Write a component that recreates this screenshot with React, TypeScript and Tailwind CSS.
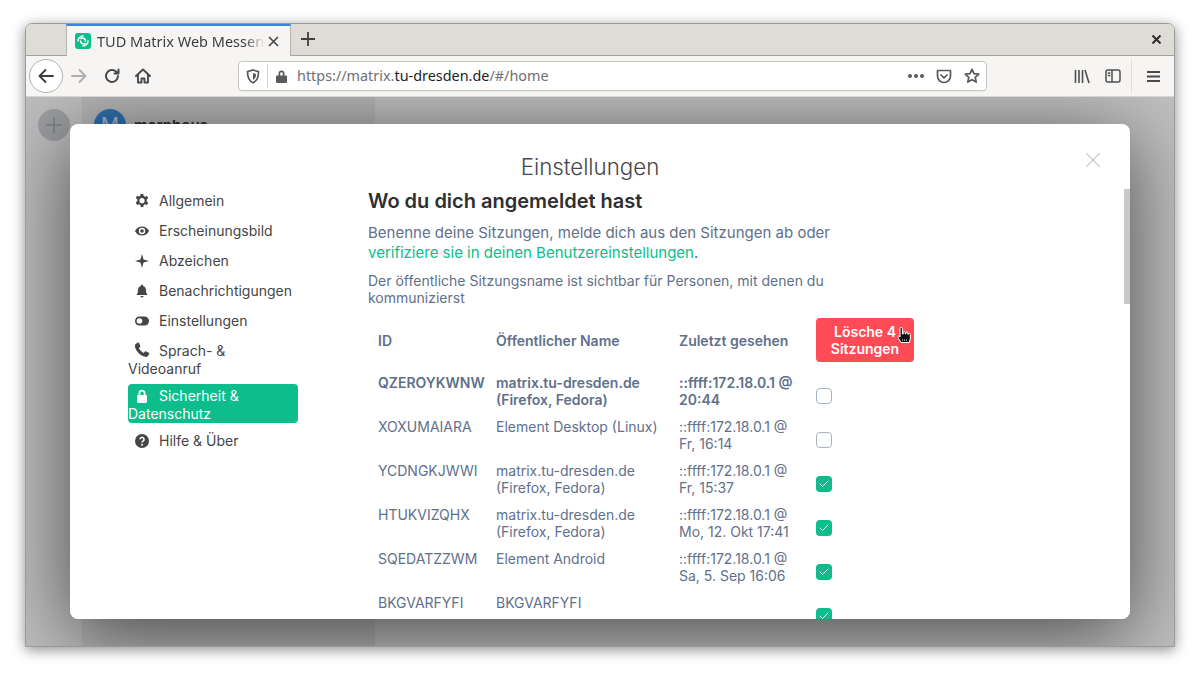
import React from "react";
import { Check } from "lucide-react";

const nav = [
  { t: "Allgemein", i: "gear" },
  { t: "Erscheinungsbild", i: "eye" },
  { t: "Abzeichen", i: "star" },
  { t: "Benachrichtigungen", i: "bell" },
  { t: "Einstellungen", i: "toggle" },
  { t: "Sprach- & Videoanruf", i: "phone" },
  { t: "Sicherheit & Datenschutz", i: "lock", active: true },
  { t: "Hilfe & Über", i: "help" },
];

function NavIcon({ i, active }: { i: string; active?: boolean }) {
  const c = "w-[14px] h-[14px] absolute left-[7px] " + (active ? "top-[5px]" : "top-[2px]");
  if (i === "gear")
    return (
      <svg className={c} viewBox="0 0 14 14">
        <path
          fill="currentColor"
          d="M5.700 0h2.600l.4 2 1.300.7 1.900-.7 1.300 2.300-1.500 1.300v1.800l1.500 1.300-1.300 2.300-1.900-.7-1.300.7-.4 2H5.700l-.4-2-1.300-.7-1.900.7L.8 8.400l1.500-1.300V5.300L.8 4l1.300-2.300 1.900.7 1.300-.7z"
        />
        <circle cx="7" cy="6.700" r="2.600" fill="#fff" />
      </svg>
    );
  if (i === "eye")
    return (
      <svg className={c} viewBox="0 0 14 14">
        <path fill="currentColor" d="M0 7c1.500-3 4-4.500 7-4.500S12.500 4 14 7c-1.500 3-4 4.500-7 4.500S1.500 10 0 7z" />
        <circle cx="7" cy="7" r="3.200" fill="#fff" />
        <circle cx="7" cy="7" r="1.800" fill="currentColor" />
      </svg>
    );
  if (i === "star")
    return (
      <svg className={c} viewBox="0 0 14 14" fill="currentColor">
        <path d="M7 0 L8.500 5.500 L14 7 L8.500 8.500 L7 14 L5.500 8.500 L0 7 L5.500 5.500 Z" />
      </svg>
    );
  if (i === "bell")
    return (
      <svg className={c} viewBox="0 0 14 14" fill="currentColor">
        <path d="M7 0.500a1 1 0 0 1 1 1v.4C9.800 2.400 11 4 11 6c0 3 .8 4 1.600 5H1.400C2.200 10 3 9 3 6c0-2 1.200-3.600 3-4.100V1.500a1 1 0 0 1 1-1zM5.500 12h3a1.500 1.500 0 0 1-3 0z" />
      </svg>
    );
  if (i === "toggle")
    return (
      <svg className={c} viewBox="0 0 14 14">
        <rect x="0" y="2.500" width="14" height="9" rx="4.500" fill="currentColor" />
        <circle cx="4.500" cy="7" r="2.800" fill="#fff" />
      </svg>
    );
  if (i === "phone")
    return (
      <svg className="w-[16px] h-[16px] absolute left-[6px] top-[0px]" viewBox="0 0 16 16" fill="currentColor">
        <path d="M1.500 2.200 3.800.6c.4-.3 1-.2 1.200.3l1.300 2.800c.2.400.1.800-.2 1.100L4.900 5.900c.8 2 2.600 3.900 4.800 5l1.200-1.300c.3-.3.800-.4 1.200-.2l2.700 1.300c.5.2.6.800.4 1.200l-1.500 2.300c-.3.500-.8.700-1.300.7C6.600 14.500 1 8.700.9 3.400c0-.5.200-.9.600-1.200z" />
      </svg>
    );
  if (i === "lock")
    return (
      <svg className={c} viewBox="0 0 14 14" fill="currentColor">
        <path d="M3.500 6V4.300a3.500 3.500 0 0 1 7 0V6h.5a1 1 0 0 1 1 1v5.500a1.500 1.500 0 0 1-1.500 1.500h-7A1.500 1.500 0 0 1 2 12.500V7a1 1 0 0 1 1-1zM5.300 6h3.400V4.300a1.700 1.700 0 0 0-3.400 0z" />
      </svg>
    );
  return (
    <svg className={c} viewBox="0 0 14 14">
      <circle cx="7" cy="7" r="7" fill="currentColor" />
      <path d="M5 5.300a2 2 0 1 1 3 1.800c-.7.400-1 .7-1 1.500" fill="none" stroke="#fff" strokeWidth="1.600" />
      <circle cx="7" cy="10.700" r="1" fill="#fff" />
    </svg>
  );
}

const rows = [
  { id: "QZEROYKWNW", name: "matrix.tu-dresden.de (Firefox, Fedora)", seen: "::ffff:172.18.0.1 @ 20:44", checked: false, bold: true },
  { id: "XOXUMAIARA", name: "Element Desktop (Linux)", seen: "::ffff:172.18.0.1 @ Fr, 16:14", checked: false },
  { id: "YCDNGKJWWI", name: "matrix.tu-dresden.de (Firefox, Fedora)", seen: "::ffff:172.18.0.1 @ Fr, 15:37", checked: true },
  { id: "HTUKVIZQHX", name: "matrix.tu-dresden.de (Firefox, Fedora)", seen: "::ffff:172.18.0.1 @ Mo, 12. Okt 17:41", checked: true },
  { id: "SQEDATZZWM", name: "Element Android", seen: "::ffff:172.18.0.1 @ Sa, 5. Sep 16:06", checked: true },
  { id: "BKGVARFYFI", name: "BKGVARFYFI", seen: "", checked: true },
];

function Cursor() {
  return (
    <svg className="absolute left-[81px] top-[9px]" width="15" height="18" viewBox="0 0 15 18">
      <path
        d="M3 1.500a1.200 1.200 0 0 1 2.400 0V7h.8V5.500a1 1 0 0 1 2 0V7h.6V6a1 1 0 0 1 2 0v1.300h.5a1 1 0 0 1 2 0V12l-1 3.500H4L1 10.500c-.6-1 .6-2 1.500-1.200L3 10z"
        fill="#111"
        stroke="#fff"
        strokeWidth="1"
      />
      <path d="M5 13h1M7 13h1M9 13h1" stroke="#fff" strokeWidth="1" />
    </svg>
  );
}

function Toolbar() {
  return (
    <div className="h-[41px] flex items-center bg-[#f6f5f4] border-b border-[#d8d6d3] pl-[3px] text-[#555753]">
      <div className="w-[34px] h-[34px] rounded-full bg-white border border-[#b5b3b0] flex items-center justify-center">
        <svg width="16" height="16" viewBox="0 0 16 16" fill="none" stroke="#3d3d3d" strokeWidth="1.800" strokeLinecap="round" strokeLinejoin="round">
          <path d="M15 8H1.500M7.500 2l-6 6 6 6" />
        </svg>
      </div>
      <svg className="ml-[8px]" width="16" height="16" viewBox="0 0 16 16" fill="none" stroke="#aeaeae" strokeWidth="1.800" strokeLinecap="round" strokeLinejoin="round">
        <path d="M1 8h13.500M8.500 2l6 6-6 6" />
      </svg>
      <svg className="ml-[17px]" width="16" height="16" viewBox="0 0 16 16" fill="none" stroke="#4a4a4a" strokeWidth="2" strokeLinecap="round" strokeLinejoin="round">
        <path d="M14 8a6 6 0 1 1-1.800-4.300L14 5.500M14.500 1.500v4h-4" />
      </svg>
      <svg className="ml-[15px]" width="16" height="16" viewBox="0 0 16 16" fill="none" stroke="#4a4a4a" strokeWidth="1.900" strokeLinecap="round" strokeLinejoin="round">
        <path d="M1 8l7-6.500L15 8M3 6.500V14.500h3.500V10.500h3v4H13V6.500" />
      </svg>
      <div className="ml-[87px] w-[749px] h-[30px] bg-white border border-[#c9c7c4] rounded-[4px] flex items-center shadow-[0_1px_0_rgba(0,0,0,0.04)]">
        <svg className="ml-[7px]" width="14" height="15" viewBox="0 0 14 15" fill="none" stroke="#5a5a5a" strokeWidth="1.700">
          <path d="M7 1l5.500 1.700c0 5-1 9-5.500 11C2.500 11.700 1.500 7.700 1.500 2.700z" />
          <path d="M7 4l3 1c0 3-.5 4.500-3 6z" fill="#5a5a5a" stroke="none" />
        </svg>
        <div className="ml-[7px] w-px h-[24px] bg-[#d5d3d0]" />
        <svg className="ml-[7px]" width="13" height="15" viewBox="0 0 13 15" fill="#5a5a5a">
          <path d="M3.500 6.500V4.500a3 3 0 0 1 6 0v2H11a1 1 0 0 1 1 1V13a1 1 0 0 1-1 1H2a1 1 0 0 1-1-1V7.500a1 1 0 0 1 1-1zM5.200 6.500h2.600V4.500a1.300 1.300 0 0 0-2.600 0z" />
        </svg>
        <div className="ml-[9px] text-[14.4px] text-[#6f6f6f] whitespace-nowrap [font-family:'Noto_Sans',sans-serif]">
          https://matrix.<span className="text-[#1d1d1d]">tu-dresden.de</span>/#/home
        </div>
        <div className="ml-auto flex items-center">
          <div className="flex gap-[2px]">
            <div className="w-[4px] h-[4px] rounded-full bg-[#5a5a5a]" />
            <div className="w-[4px] h-[4px] rounded-full bg-[#5a5a5a]" />
            <div className="w-[4px] h-[4px] rounded-full bg-[#5a5a5a]" />
          </div>
          <svg className="ml-[12px]" width="16" height="15" viewBox="0 0 16 15" fill="none" stroke="#5a5a5a" strokeWidth="1.700" strokeLinecap="round" strokeLinejoin="round">
            <path d="M1.500 1.500h13V7a6.500 6.500 0 0 1-13 0zM5 6l3 2.800L11 6" />
          </svg>
          <svg className="ml-[12px] mr-[6px]" width="16" height="16" viewBox="0 0 16 16" fill="none" stroke="#5a5a5a" strokeWidth="1.700" strokeLinejoin="round">
            <path d="M8 1.300l2 4.400 4.800.5-3.600 3.200 1 4.700L8 11.700l-4.200 2.400 1-4.700-3.600-3.200 4.800-.5z" />
          </svg>
        </div>
      </div>
      <svg className="ml-[87px]" width="16" height="15" viewBox="0 0 16 15" fill="none" stroke="#4f4f4f" strokeWidth="1.600">
        <path d="M1.500 1v13M5 1v13M8.500 1v13M11 1l4 13" />
      </svg>
      <svg className="ml-[15px]" width="16" height="14" viewBox="0 0 16 14" fill="none" stroke="#4f4f4f" strokeWidth="1.500">
        <rect x="1" y="1" width="14" height="12" rx="2" />
        <path d="M7 1v12" />
        <path d="M2.800 4h2.500M2.800 6.500h2.500" />
      </svg>
      <div className="ml-[10px] w-px h-[34px] bg-[#e0dedb]" />
      <svg className="ml-[15px]" width="13" height="13" viewBox="0 0 13 13" stroke="#4a4a4a" strokeWidth="1.800">
        <path d="M0 2h13M0 6.500h13M0 11h13" />
      </svg>
    </div>
  );
}

export default function App() {
  return (
    <div className="w-[1200px] h-[675px] bg-white pt-[23px] pl-[25px] overflow-hidden [font-family:Inter,sans-serif]">
      <div className="relative w-[1150px] h-[624px] rounded-t-[7px] border border-[#9a9a9a] overflow-hidden shadow-[0_3px_14px_rgba(0,0,0,0.45)] flex flex-col">
        <div className="h-[32px] bg-[#dfdcd8] border-b border-[#a3a19e] flex items-end shrink-0 relative">
          <div className="ml-[40px] w-[225px] h-[32px] bg-[#f6f5f4] border-x border-[#b5b3b0] border-t-[2px] border-t-[#3584e4] -mb-px flex items-center relative">
            <div className="ml-[8px] w-[16px] h-[16px] rounded-[3px] bg-[#0dbd8b] flex items-center justify-center">
              <svg width="12" height="12" viewBox="0 0 12 12" fill="none" stroke="#fff" strokeWidth="1.500" strokeLinecap="round">
                <path d="M1 6a5 5 0 0 1 5-5M11 6a5 5 0 0 1-5 5M4 3.500a3 3 0 0 1 4.500 2.500M8 8.500A3 3 0 0 1 3.500 6" />
              </svg>
            </div>
            <div className="ml-[6px] text-[14.5px] text-[#3d3d3d] whitespace-nowrap w-[168px] h-[22px] leading-[22px] overflow-hidden [font-family:'Noto_Sans',sans-serif] [mask-image:linear-gradient(to_right,#000_88%,transparent)]">
              TUD Matrix Web Messenger
            </div>
            <svg className="ml-[3px]" width="11" height="11" viewBox="0 0 11 11" stroke="#4a4a4a" strokeWidth="1.700">
              <path d="M1 1l9 9M10 1l-9 9" />
            </svg>
          </div>
          <svg className="ml-[10px] mb-[9px]" width="14" height="14" viewBox="0 0 14 14" stroke="#404040" strokeWidth="1.800">
            <path d="M7 0v14M0 7h14" />
          </svg>
          <svg className="ml-auto mr-[13px] mb-[11px]" width="9" height="9" viewBox="0 0 9 9" stroke="#2e2e2e" strokeWidth="2">
            <path d="M.5.500l8 8M8.500.500l-8 8" />
          </svg>
        </div>
        <Toolbar />

        <div className="flex-1 relative flex bg-[#bfbfbf] overflow-hidden">
          <div className="w-[56px] bg-[#bdbdbd] pt-[12px] pl-[12px]">
            <div className="w-[32px] h-[32px] rounded-full bg-[#9b9da1] flex items-center justify-center">
              <svg width="16" height="16" viewBox="0 0 16 16" stroke="#7f8185" strokeWidth="1.600">
                <path d="M8 0v16M0 8h16" />
              </svg>
            </div>
          </div>
          <div className="w-[293px] bg-[#b4b4b4] pl-[12px] pt-[12px] flex items-start relative">
            <div className="w-[32px] h-[32px] rounded-full bg-[#2f70ad] text-[#9fb9d4] text-[20px] flex items-center justify-center">M</div>
            <div className="ml-[8px] mt-[6px] font-semibold text-[15px] text-[#2b2b2b]">morphous</div>
          </div>
          <div className="flex-1 bg-[#bfbfbf]" />

          {/* modal */}
          <div className="absolute left-[44px] top-[27px] w-[1060px] h-[495px] bg-white rounded-[8px] shadow-[0_15px_80px_rgba(0,0,0,0.62)] overflow-hidden">
            <div className="relative h-full pl-[58px] pt-[29px]">
              <div className="absolute left-[1054px] top-[65px] w-[6px] h-[115px] bg-[#c8c8c8]" />
              <svg className="absolute left-[1016px] top-[29px]" width="14" height="14" viewBox="0 0 14 14" stroke="#c4c4c4" strokeWidth="1.100">
                <path d="M0 0l14 14M14 0L0 14" />
              </svg>
              <div className="-ml-[58px] pr-[20px] text-center text-[22.300px] font-light text-[#45474a] leading-[28px]">Einstellungen</div>
              <div className="flex mt-[8px]">
                <div className="w-[170px] shrink-0 text-[14px] leading-[18px] text-[#454545] pt-[3px]">
                  {nav.map((n) => (
                    <div
                      key={n.t}
                      className={
                        n.active
                          ? "relative rounded-[4px] -mt-[6px] mb-[9px] pt-[3px] indent-[31px] bg-[#0dbd8b] text-white"
                          : "relative mb-[12px] indent-[31px]"
                      }
                    >
                      <NavIcon i={n.i} active={n.active} />
                      {n.t}
                    </div>
                  ))}
                </div>
                <div className="ml-[70px] w-[546px] text-[#61708b]">
                  <h2 className="text-[20px] font-semibold text-[#2e2f32] leading-[26px] -mt-[1px]">Wo du dich angemeldet hast</h2>
                  <p className="mt-[9px] w-[470px] text-[15px] leading-[20px]">
                    Benenne deine Sitzungen, melde dich aus den Sitzungen ab oder{" "}
                    <span className="text-[#0dbd8b]">verifiziere sie in deinen Benutzereinstellungen</span>.
                  </p>
                  <p className="mt-[9px] w-[470px] text-[14px] leading-[17px]">
                    Der öffentliche Sitzungsname ist sichtbar für Personen, mit denen du kommunizierst
                  </p>
                  <div className="mt-[12px] ml-[10px] text-[14px] leading-[17px]">
                    <div className="flex items-center h-[44px] font-semibold">
                      <div className="w-[118px]">ID</div>
                      <div className="w-[183px]">Öffentlicher Name</div>
                      <div className="w-[137px]">Zuletzt gesehen</div>
                      <div className="relative w-[98px] h-[44px] rounded-[4px] bg-[#ff4b55] text-white text-center font-semibold pt-[5px]">
                        Lösche 4
                        <br />
                        Sitzungen
                        <Cursor />
                      </div>
                    </div>
                    <div className="mt-[12px]">
                      {rows.map((r) => (
                        <div key={r.id} className={"flex h-[44px] " + (r.bold ? "font-semibold" : "")}>
                          <div className="w-[118px] whitespace-nowrap">{r.id}</div>
                          <div className="w-[183px] pr-[12px]">{r.name}</div>
                          <div className="w-[137px] pr-[12px]">{r.seen}</div>
                          <div className="pt-[14px]">
                            {r.checked ? (
                              <div className="w-[16px] h-[16px] rounded-[4px] bg-[#0dbd8b] flex items-center justify-center">
                                <Check className="w-[12px] h-[12px] text-white" strokeWidth={1.8} />
                              </div>
                            ) : (
                              <div className="w-[16px] h-[16px] rounded-[4px] border border-[#a8b3c4] bg-white" />
                            )}
                          </div>
                        </div>
                      ))}
                    </div>
                  </div>
                </div>
              </div>
            </div>
          </div>
        </div>
      </div>
    </div>
  );
}
